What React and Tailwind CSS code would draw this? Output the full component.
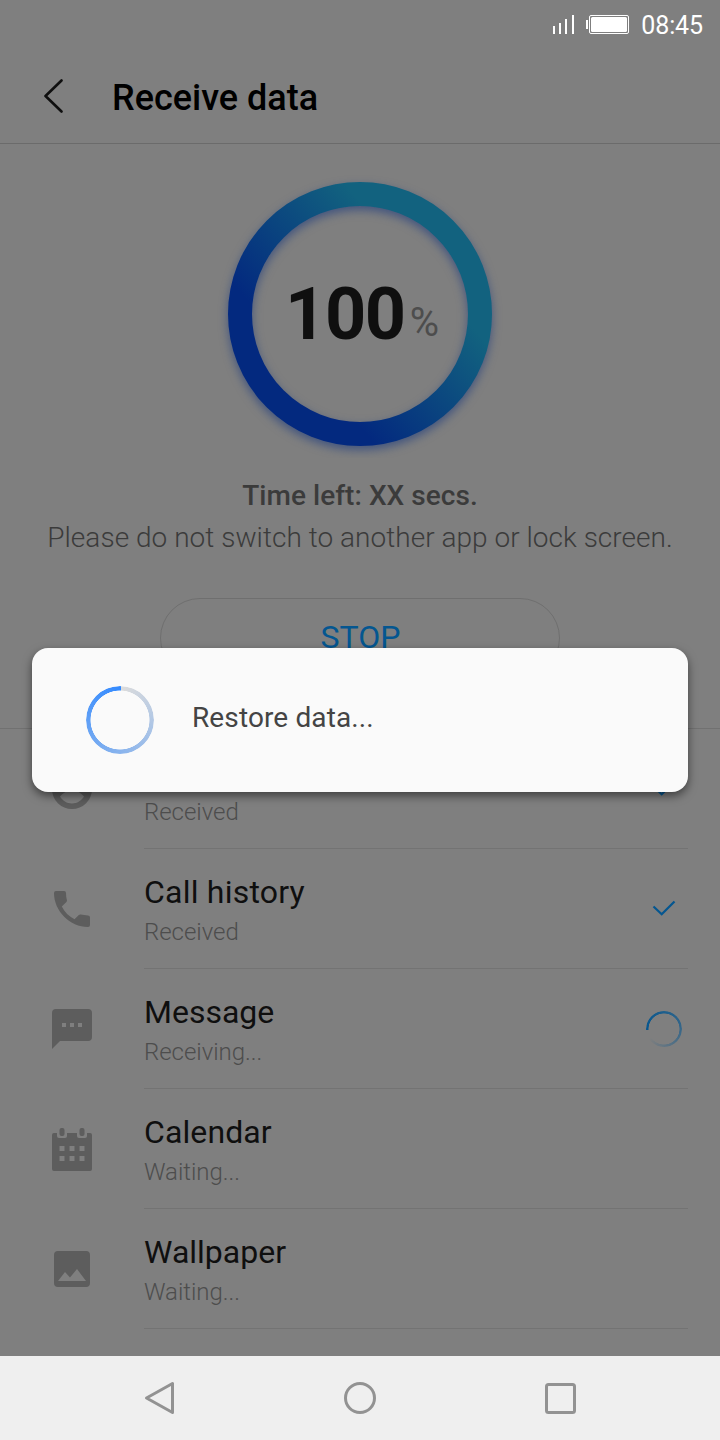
import React from "react";

function SignalIcon() {
  return (
    <svg width="24" height="20" viewBox="0 0 24 20" fill="#fff">
      <rect x="1" y="11" width="2" height="8" />
      <rect x="7" y="8" width="2" height="11" />
      <rect x="13" y="4" width="2" height="15" />
      <rect x="20" y="0" width="2" height="19" />
    </svg>
  );
}

function BatteryIcon() {
  return (
    <svg width="43" height="20" viewBox="0 0 43 20">
      <rect x="0" y="5" width="2" height="9" fill="#fff" />
      <rect x="3.500" y="0.500" width="39" height="18" rx="1.500" fill="none" stroke="#fff" />
      <rect x="5" y="2" width="36" height="15" rx="1.500" fill="#fff" />
    </svg>
  );
}

function ProgressRing() {
  return (
    <svg className="col-start-1 row-start-1" width="312" height="312" viewBox="0 0 312 312">
      <defs>
        <linearGradient id="ring" gradientUnits="userSpaceOnUse" x1="212" y1="106" x2="100" y2="206">
          <stop offset="0" stopColor="#12627f" />
          <stop offset="1" stopColor="#03297f" />
        </linearGradient>
        <filter id="glow" x="-10%" y="-10%" width="120%" height="120%" colorInterpolationFilters="sRGB">
          <feDropShadow dx="0" dy="4" stdDeviation="5" floodColor="#03297f" floodOpacity="0.500" />
        </filter>
      </defs>
      <circle cx="156" cy="156" r="120" fill="none" stroke="url(#ring)" strokeWidth="24" filter="url(#glow)" />
    </svg>
  );
}

function ContactIcon() {
  return (
    <svg width="40" height="40" viewBox="0 0 40 40" fill="#5d5d5d">
      <path fillRule="evenodd" d="M20 0a20 20 0 1 0 0 40 20 20 0 0 0 0-40zM20 6a6 6 0 1 1 0 12 6 6 0 0 1 0-12zM20 34.400c-5 0-9.600-2.800-12-7 3-4 7.500-6 12-6s9 2 12 6c-2.400 4.200-7 7-12 7z" />
    </svg>
  );
}

function PhoneIcon() {
  return (
    <svg width="40" height="40" viewBox="0 0 40 40" fill="#5d5d5d">
      <path d="M4 2h8q2 0 2 2 0 4 .9 7 .3 1-.5 2l-4.600 4.600c2.900 5.700 7 9.800 12.700 12.700l4.300-4.300q1-.9 2-.5 3.200.7 7.200.9 2 0 2 2v7.600q0 2-2 2C18 38 2 22 2 4q0-2 2-2z" />
    </svg>
  );
}

function MessageIcon() {
  return (
    <svg width="40" height="40" viewBox="0 0 40 40" fill="#5d5d5d">
      <path fillRule="evenodd" d="M4 0h32q4 0 4 4v24q0 4-4 4H8l-8 8V4q0-4 4-4zM10 14v4h4v-4zM18 14v4h4v-4zM26 14v4h4v-4z" />
    </svg>
  );
}

function CalendarIcon() {
  return (
    <svg width="40" height="43" viewBox="0 0 40 43" fill="#5d5d5d">
      <rect x="7.500" y="0" width="5" height="8" rx="2" />
      <rect x="27.500" y="0" width="5" height="8" rx="2" />
      <path fillRule="evenodd" d="M2 5h3v3q0 2 2 2h6q2 0 2-2V5h10v3q0 2 2 2h6q2 0 2-2V5h3q2 0 2 2v34q0 2-2 2H2q-2 0-2-2V7q0-2 2-2zM7.500 18v5h5v-5zM17.500 18v5h5v-5zM27.500 18v5h5v-5zM7.500 28v5h5v-5zM17.500 28v5h5v-5zM27.500 28v5h5v-5z" />
    </svg>
  );
}

function ImageIcon() {
  return (
    <svg width="36" height="36" viewBox="0 0 36 36" fill="#5d5d5d">
      <path fillRule="evenodd" d="M4 0h28q4 0 4 4v28q0 4-4 4H4q-4 0-4-4V4q0-4 4-4zM4 30h28L23 18l-7 8.500L11 21z" />
    </svg>
  );
}

function Check() {
  return (
    <svg className="mb-px" width="24" height="16" viewBox="0 0 24 16" fill="none" stroke="#045690" strokeWidth="2.200">
      <path d="M1.500 6.500l8.200 7.700L22.500 1.500" />
    </svg>
  );
}

function Spinner() {
  return (
    <div className="h-9 w-9 rounded-full bg-[conic-gradient(from_266deg,#045690,rgba(4,86,144,0.6)_50%,rgba(4,86,144,0)_92%)] [mask:radial-gradient(circle,transparent_15.2px,#000_15.8px)]" />
  );
}

const items = [
  { title: "Contacts", status: "Received", icon: <ContactIcon />, pad: "pt-[40px]", end: <Check /> },
  { title: "Call history", status: "Received", icon: <PhoneIcon />, pad: "pt-[40px]", end: <Check />, tracking: "tracking-[0.22px]" },
  { title: "Message", status: "Receiving...", icon: <MessageIcon />, pad: "pt-[40px]", end: <Spinner /> },
  { title: "Calendar", status: "Waiting...", icon: <CalendarIcon />, pad: "pt-[39px]", tracking: "tracking-[0.1px]" },
  { title: "Wallpaper", status: "Waiting...", icon: <ImageIcon />, pad: "pt-[42px]" },
];

function Row({ item }) {
  return (
    <div className="flex h-[120px] pr-8">
      <div className={"flex w-36 shrink-0 items-start justify-center " + item.pad}>{item.icon}</div>
      <div className="flex flex-1 border-b border-[#737373]">
        <div className="flex-1 pt-[23px]">
          <div className={"h-10 text-[32px] leading-10 text-[#0f0f0f] " + (item.tracking || "")}>{item.title}</div>
          <div className="h-10 text-[24px] leading-10 font-light tracking-[-0.03px] text-[#4d4d4d]">{item.status}</div>
        </div>
        <div className="flex w-12 items-center justify-center">{item.end}</div>
      </div>
    </div>
  );
}

export default function App() {
  return (
    <div className="relative flex h-[1440px] w-[720px] flex-col overflow-hidden bg-[#7f7f7f] font-['Roboto',sans-serif]">
      <div className="flex h-12 items-center justify-end pt-[2px] pr-[17px] text-white">
        <SignalIcon />
        <div className="ml-[10px]"><BatteryIcon /></div>
        <div className="ml-3 text-[25px] leading-none tracking-[-0.1px]">08:45</div>
      </div>

      <header className="flex h-24 items-center border-b border-[#6b6b6b] pl-[43px]">
        <svg width="22" height="34" viewBox="0 0 22 34" fill="none" stroke="#0f0f0f" strokeWidth="2.600" strokeLinecap="round" strokeLinejoin="round">
          <path d="M18.500 1.500L2.500 17 18.500 32.500" />
        </svg>
        <h1 className="ml-[47px] pt-1 text-[36px] font-medium text-black">Receive data</h1>
      </header>

      <section className="flex h-[585px] shrink-0 flex-col items-center border-b border-[#717171] pt-[14px]">
        <div className="grid place-items-center">
          <ProgressRing />
          <div className="col-start-1 row-start-1 flex items-baseline pt-px pl-1">
            <span className="text-[72px] leading-[84px] font-bold tracking-[-1.400px] text-[#0f0f0f]">100</span>
            <span className="ml-[5px] -translate-y-[3px] text-[40px] text-[#4d4d4d]">%</span>
          </div>
        </div>
        <div className="mt-[5px] h-[42px] text-[28px] leading-[42px] font-medium tracking-[0.04px] text-[#3b3b3b]">Time left: XX secs.</div>
        <div className="h-[42px] text-[28px] leading-[42px] font-light tracking-[0.03px] whitespace-nowrap text-[#3b3b3b]">Please do not switch to another app or lock screen.</div>
        <div className="mt-[39px] flex h-20 w-[400px] items-center justify-center rounded-full border border-[#6f6f6f] pb-[3px] pl-px text-[32px] text-[#045690]">STOP</div>
      </section>

      <main className="h-[627px] shrink-0 overflow-hidden">
        {items.map((item) => (
          <Row key={item.title} item={item} />
        ))}
      </main>

      <nav className="flex h-[84px] shrink-0 items-center justify-between bg-[#efefef] px-36">
        <svg width="32" height="34" viewBox="0 0 32 34" fill="none" stroke="#929292" strokeWidth="3" strokeLinejoin="round">
          <path d="M28.500 2.500v29L2.500 17z" />
        </svg>
        <svg width="32" height="32" viewBox="0 0 32 32" fill="none" stroke="#929292" strokeWidth="3">
          <circle cx="16" cy="16" r="14.500" />
        </svg>
        <svg width="32" height="32" viewBox="0 0 32 32" fill="none" stroke="#929292" strokeWidth="3">
          <rect x="2.500" y="2.500" width="28" height="28" rx="2" />
        </svg>
      </nav>

      <div className="absolute top-[648px] left-8 flex h-36 w-[656px] items-center rounded-2xl bg-[#fafafa] pl-[54px] shadow-[0_4px_10px_rgba(0,0,0,0.5)]">
        <div className="h-[68px] w-[68px] rounded-full bg-[conic-gradient(from_2deg,#dcdcdc,#338aff)] [mask:radial-gradient(circle,transparent_29.2px,#000_29.8px)]" />
        <div className="ml-[38px] pb-[5px] text-[28px] tracking-[0.12px] text-[#444]">Restore data...</div>
      </div>
    </div>
  );
}
